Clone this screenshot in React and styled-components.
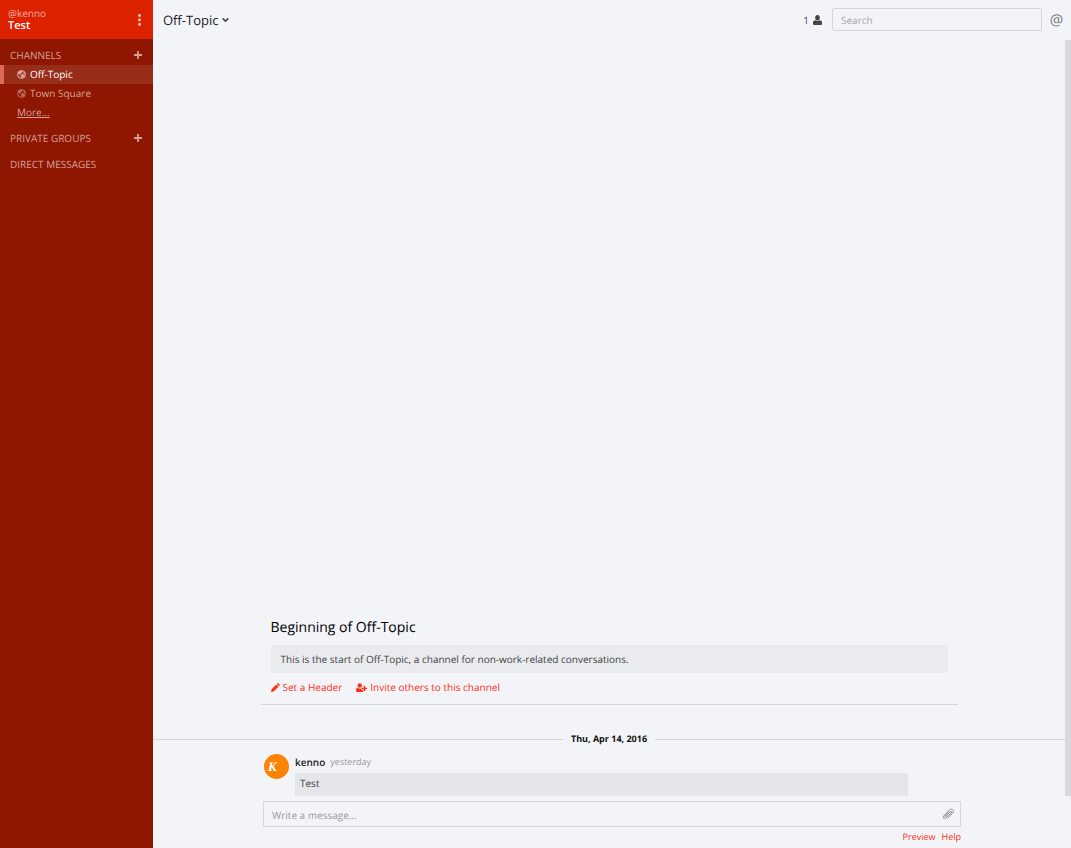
import React from "react";
import styled, { createGlobalStyle, css } from "styled-components";

const GlobalStyle = createGlobalStyle`
  *, *::before, *::after { box-sizing: border-box; }
  body {
    margin: 0;
    background: #f2f4f8;
    color: #444;
    font-family: "Open Sans", "Noto Sans", sans-serif;
    font-size: 10px;
    line-height: 16px;
    text-rendering: geometricPrecision;
  }
  button, input, textarea { font: inherit; text-rendering: inherit; }
  h1, h2, h3, p, ul { margin: 0; padding: 0; font-weight: 400; }
  ul { list-style: none; }
`;

const Shell = styled.div`
  display: flex;
  min-height: 100vh;
`;

const Sidebar = styled.aside`
  flex: 0 0 153px;
  background: #8f1600;
  color: #d2a299;
`;

const TeamHeader = styled.header`
  display: flex;
  align-items: center;
  justify-content: space-between;
  height: 39px;
  padding: 0 8px;
  background: #dd2200;
`;

const UserName = styled.div`
  line-height: 12px;
  color: #f2b0a4;
`;

const TeamName = styled.h1`
  font-size: 11px;
  font-weight: 600;
  line-height: 14px;
  color: #fff;
`;

const IconButton = styled.button`
  display: flex;
  align-items: center;
  justify-content: center;
  padding: 0;
  border: 0;
  background: none;
  color: inherit;
  cursor: pointer;
`;

const MenuButton = styled(IconButton)`
  width: 12px;
  height: 20px;
  color: #f8d3cc;
`;

const Section = styled.section`
  padding-top: 7px;
`;

const SectionHead = styled.div`
  display: flex;
  align-items: center;
  justify-content: space-between;
  height: 19px;
  padding: 0 10px 1px;

  h2 {
    font-size: 10px;
  }
`;

const channelRow = css`
  display: flex;
  align-items: center;
  height: 19px;
  padding-bottom: 1px;
  color: inherit;
`;

const ChannelLink = styled.a`
  ${channelRow}
  gap: 4px;
  padding-left: ${(p) => (p.$active ? "13px" : "17px")};
  border-left: ${(p) => (p.$active ? "4px solid #dd6a58" : "0")};
  background: ${(p) => (p.$active ? "#982d1a" : "transparent")};
  color: ${(p) => (p.$active ? "#fff" : "inherit")};
  text-decoration: none;

  svg {
    color: ${(p) => (p.$active ? "#dba69c" : "#b9675a")};
  }
`;

const MoreLink = styled.a`
  ${channelRow}
  padding-left: 17px;
  text-decoration: underline;
`;

const Main = styled.main`
  display: flex;
  flex: 1;
  flex-direction: column;
  min-width: 0;
`;

const ChannelHeader = styled.header`
  display: flex;
  align-items: center;
  height: 40px;
  padding: 0 8px 1px 10px;
`;

const ChannelTitle = styled(IconButton)`
  gap: 3px;
  margin-right: auto;
  color: #222;
  font-size: 13px;
`;

const Members = styled(IconButton)`
  gap: 4px;
  margin-right: 10px;
  color: #555;
`;

const SearchInput = styled.input`
  width: 210px;
  height: 23px;
  padding: 0 8px;
  border: 1px solid #d5d7db;
  border-radius: 2px;
  background: transparent;
  color: #333;

  &::placeholder { color: #a5a6a9; opacity: 1; }
`;

const Mentions = styled(IconButton)`
  width: 13px;
  margin-left: 8px;
  color: #777;
  font-size: 15px;
`;

const Feed = styled.div`
  display: flex;
  flex: 1;
`;

const Posts = styled.div`
  display: flex;
  flex: 1;
  flex-direction: column;
  justify-content: flex-end;
`;

const Scrollbar = styled.div`
  flex: 0 0 6px;
  background: #d8dade;
`;

const Intro = styled.section`
  width: 100%;
  max-width: 697px;
  margin: 0 auto 26px;
  padding: 0 10px 9px;
  border-bottom: 1px solid #d5d7dc;
`;

const IntroTitle = styled.h2`
  margin-bottom: 7px;
  color: #000;
  font-size: 14px;
  line-height: 20px;
`;

const IntroText = styled.p`
  padding: 6px 10px;
  border-radius: 1px;
  background: #e9ebee;
`;

const IntroActions = styled.div`
  display: flex;
  gap: 14px;
  margin-top: 6px;
`;

const ActionLink = styled.a`
  display: flex;
  align-items: center;
  gap: 3px;
  color: #ff2f1a;
  text-decoration: none;
`;

const DateRow = styled.div`
  display: flex;
  align-items: center;
  gap: 8px;
  margin-bottom: 7px;
  color: #111;
  font-size: 9px;
  font-weight: 700;

  &::before, &::after {
    content: "";
    flex: 1;
    height: 1px;
    background: #d5d7dc;
  }
`;

const Post = styled.article`
  display: flex;
  gap: 6px;
  width: 100%;
  max-width: 690px;
  margin: 0 auto;
`;

const PostBody = styled.div`
  flex: 1;
  margin-right: 46px;
`;

const PostMeta = styled.div`
  display: flex;
  gap: 5px;
  margin-bottom: 3px;
  color: #999;
  font-size: 9px;

  h3 {
    color: #222;
    font-size: 10px;
    font-weight: 600;
  }
`;

const PostText = styled.p`
  height: 23px;
  padding: 2px 5px;
  background: #e5e6ea;
`;

const Composer = styled.form`
  width: 100%;
  max-width: 698px;
  margin: 0 auto;
  padding: 5px 0 3px;
`;

const MessageBox = styled.div`
  display: flex;
  align-items: center;
  height: 26px;
  padding-right: 5px;
  border: 1px solid #d5d7db;
`;

const MessageInput = styled.input`
  flex: 1;
  height: 24px;
  padding: 1px 8px 0;
  border: 0;
  outline: 0;
  background: transparent;
  color: #333;

  &::placeholder { color: #999a9d; opacity: 1; }
`;

const ComposerLinks = styled.div`
  display: flex;
  justify-content: flex-end;
  gap: 6px;
  padding-top: 2px;
  font-size: 9px;

  a {
    color: #ff2f1a;
    text-decoration: none;
  }
`;

const DotsIcon = () => (
  <svg width="3" height="12" viewBox="0 0 3 12" fill="currentColor">
    <circle cx="1.5" cy="1.5" r="1.4" />
    <circle cx="1.5" cy="6" r="1.4" />
    <circle cx="1.5" cy="10.5" r="1.4" />
  </svg>
);

const PlusIcon = () => (
  <svg width="10" height="10" viewBox="0 0 10 10" stroke="currentColor" strokeWidth="1.8">
    <path d="M5 1v8M1 5h8" />
  </svg>
);

const ChevronIcon = () => (
  <svg width="7" height="6" viewBox="0 0 7 6" fill="none" stroke="#444" strokeWidth="1.6">
    <path d="M.7 1.4 3.5 4.2 6.3 1.4" />
  </svg>
);

const GlobeIcon = () => (
  <svg width="9" height="9" viewBox="0 0 18 18">
    <circle cx="9" cy="9" r="8" fill="currentColor" fillOpacity=".15" stroke="currentColor" strokeWidth="2" />
    <path fill="currentColor" d="M2 4 7 1 11 1 11 4 8 6 8 8 5 9 2 7zM9 8 14 9 16 11 13 15 10 17 8 13zM13 3 17 6 17 9 13 6z" />
  </svg>
);

const PersonIcon = () => (
  <svg width="9" height="10" viewBox="0 0 9 10" fill="#444">
    <ellipse cx="4.5" cy="2.7" rx="2.300" ry="2.7" />
    <path d="M2.500 5.200C1 5.600 0 6.100 0 7.400V8.800Q0 10 1.200 10H7.800Q9 10 9 8.800V7.400C9 6.100 8 5.600 6.500 5.200 5.500 6.300 3.500 6.300 2.500 5.200z" />
  </svg>
);

const PencilIcon = () => (
  <svg width="9" height="9" viewBox="0 0 18 18" fill="currentColor">
    <path d="M0 18 1.200 12.500 10.500 3.200 14.800 7.500 5.500 16.800zM11.700 2 13 .700Q14 0 15 .900L17.100 3Q18 4 17.300 5L16 6.300z" />
  </svg>
);

const InviteIcon = () => (
  <svg width="11" height="9" viewBox="0 0 22 18" fill="currentColor">
    <circle cx="7.500" cy="5" r="4.500" />
    <path d="M3.500 9C1 10 0 12 0 15Q0 18 2.500 18H12.500Q15 18 15 15.500V14.500H11.500V10.500C9 12 6 11.500 3.500 9z" />
    <path d="M15.500 6h3v3.500H22v3h-3.500V16h-3v-3.500H12v-3h3.500z" />
  </svg>
);

const ClipIcon = () => (
  <svg width="14" height="14" viewBox="0 0 14 14" fill="none" stroke="#8d8e91" strokeWidth="1" strokeLinecap="round">
    <path d="M4.300 9.800 9.200 4.900C10.300 3.800 11.300 4.800 10.300 5.900L5.200 11C3.400 12.800 1 10.700 2.800 8.800L8.600 3C10.900.7 14 3.600 11.700 6L6.900 10.800" />
    <path d="M4.300 9.800C3.600 9.200 4 8.500 4.500 8L7.500 5" />
  </svg>
);

const Avatar = () => (
  <svg width="25" height="25" viewBox="0 0 25 25" role="img" aria-label="kenno">
    <circle cx="12.500" cy="12.500" r="12.500" fill="#fb8408" />
    <text x="4" y="17" fill="#fff" fontFamily="Liberation Serif, serif" fontSize="13" fontStyle="italic" fontWeight="700">
      K
    </text>
  </svg>
);

const channels = [
  { name: "Off-Topic", active: true },
  { name: "Town Square", active: false },
];

const AddButton = ({ label }) => (
  <IconButton type="button" aria-label={label}>
    <PlusIcon />
  </IconButton>
);

export default function App() {
  return (
    <>
      <GlobalStyle />
      <Shell>
        <Sidebar>
          <TeamHeader>
            <div>
              <UserName>@kenno</UserName>
              <TeamName>Test</TeamName>
            </div>
            <MenuButton type="button" aria-label="Team menu">
              <DotsIcon />
            </MenuButton>
          </TeamHeader>
          <Section>
            <SectionHead>
              <h2>CHANNELS</h2>
              <AddButton label="Add channel" />
            </SectionHead>
            <ul>
              {channels.map((channel) => (
                <li key={channel.name}>
                  <ChannelLink href="#" $active={channel.active}>
                    <GlobeIcon />
                    {channel.name}
                  </ChannelLink>
                </li>
              ))}
              <li>
                <MoreLink href="#">More...</MoreLink>
              </li>
            </ul>
          </Section>
          <Section>
            <SectionHead>
              <h2>PRIVATE GROUPS</h2>
              <AddButton label="Add private group" />
            </SectionHead>
          </Section>
          <Section>
            <SectionHead>
              <h2>DIRECT MESSAGES</h2>
            </SectionHead>
          </Section>
        </Sidebar>
        <Main>
          <ChannelHeader>
            <ChannelTitle type="button">
              Off-Topic
              <ChevronIcon />
            </ChannelTitle>
            <Members type="button" aria-label="1 member">
              1
              <PersonIcon />
            </Members>
            <SearchInput type="search" aria-label="Search" placeholder="Search" />
            <Mentions type="button" aria-label="Recent mentions">@</Mentions>
          </ChannelHeader>
          <Feed>
            <Posts>
              <Intro>
                <IntroTitle>Beginning of Off-Topic</IntroTitle>
                <IntroText>This is the start of Off-Topic, a channel for non-work-related conversations.</IntroText>
                <IntroActions>
                  <ActionLink href="#">
                    <PencilIcon />
                    Set a Header
                  </ActionLink>
                  <ActionLink href="#">
                    <InviteIcon />
                    Invite others to this channel
                  </ActionLink>
                </IntroActions>
              </Intro>
              <DateRow>Thu, Apr 14, 2016</DateRow>
              <Post>
                <Avatar />
                <PostBody>
                  <PostMeta>
                    <h3>kenno</h3>
                    <time>yesterday</time>
                  </PostMeta>
                  <PostText>Test</PostText>
                </PostBody>
              </Post>
            </Posts>
            <Scrollbar />
          </Feed>
          <Composer>
            <MessageBox>
              <MessageInput aria-label="Message" placeholder="Write a message..." />
              <IconButton type="button" aria-label="Attach file">
                <ClipIcon />
              </IconButton>
            </MessageBox>
            <ComposerLinks>
              <a href="#">Preview</a>
              <a href="#">Help</a>
            </ComposerLinks>
          </Composer>
        </Main>
      </Shell>
    </>
  );
}
